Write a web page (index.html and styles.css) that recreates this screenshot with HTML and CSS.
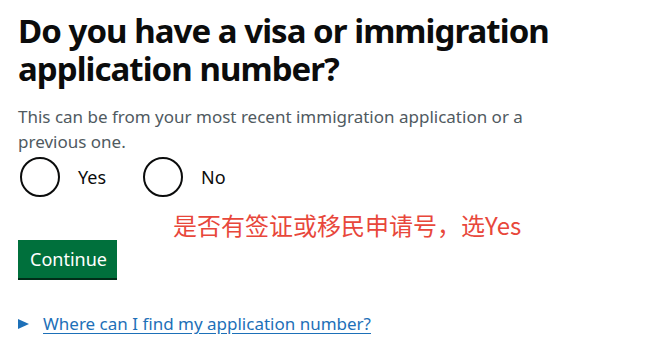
FILE: index.html
```html
<!DOCTYPE html>
<html lang="en">
<head>
<meta charset="utf-8">
<link rel="stylesheet" href="styles.css">
</head>
<body>
<main class="page">
  <h1 class="title">Do you have a visa or immigration application number?</h1>
  <p class="hint">This can be from your most recent immigration application or a previous one.</p>
  <div class="radios">
    <label class="radio"><span class="circle"></span><span class="radio-label">Yes</span></label>
    <label class="radio"><span class="circle"></span><span class="radio-label">No</span></label>
  </div>
  <div class="note">是否有签证或移民申请号，选Yes</div>
  <button class="button" type="button">Continue</button>
  <div class="details">
    <span class="arrow"></span>
    <a class="details-link" href="#">Where can I find my application number?</a>
  </div>
</main>
</body>
</html>
```

FILE: styles.css
```css
html, body {
  margin: 0;
  padding: 0;
  background: #ffffff;
}
body {
  font-family: "Noto Sans", "Liberation Sans", sans-serif;
  color: #0b0c0c;
}
.page {
  padding: 12px 18px 0 18px;
  display: flex;
  flex-direction: column;
  align-items: flex-start;
}
.title {
  margin: 0;
  font-size: 33px;
  line-height: 38px;
  font-weight: 700;
  letter-spacing: -0.95px;
  width: 560px;
}
.hint {
  margin: 16px 0 0 0;
  font-size: 17px;
  line-height: 25px;
  color: #505a5f;
  width: 530px;
}
.radios {
  display: flex;
  margin-top: 3px;
}
.radio {
  display: flex;
  align-items: center;
  width: 123px;
}
.circle {
  width: 36px;
  height: 36px;
  border: 2px solid #0b0c0c;
  border-radius: 50%;
  margin-left: 2px;
}
.radio-label {
  margin-left: 18px;
  font-size: 18px;
}
.note {
  margin: 13px 0 0 155px;
  font-family: "Noto Sans CJK SC", "Noto Sans", sans-serif;
  font-size: 24px;
  line-height: 30px;
  color: #e8473b;
}
.button {
  margin-top: 0;
  background: #00703c;
  color: #ffffff;
  border: 0;
  box-shadow: 0 2px 0 #002d18;
  font-family: "Noto Sans", sans-serif;
  font-size: 18px;
  line-height: 22px;
  padding: 8px 12px;
  height: 38px;
  width: 99px;
}
.details {
  margin-top: 34px;
  display: flex;
  align-items: center;
}
.arrow {
  width: 0;
  height: 0;
  border-top: 5px solid transparent;
  border-bottom: 5px solid transparent;
  border-left: 11px solid #1d70b8;
}
.details-link {
  margin-left: 14px;
  font-size: 17px;
  color: #1d70b8;
  text-decoration: underline;
  text-underline-offset: 3px;
}
```
